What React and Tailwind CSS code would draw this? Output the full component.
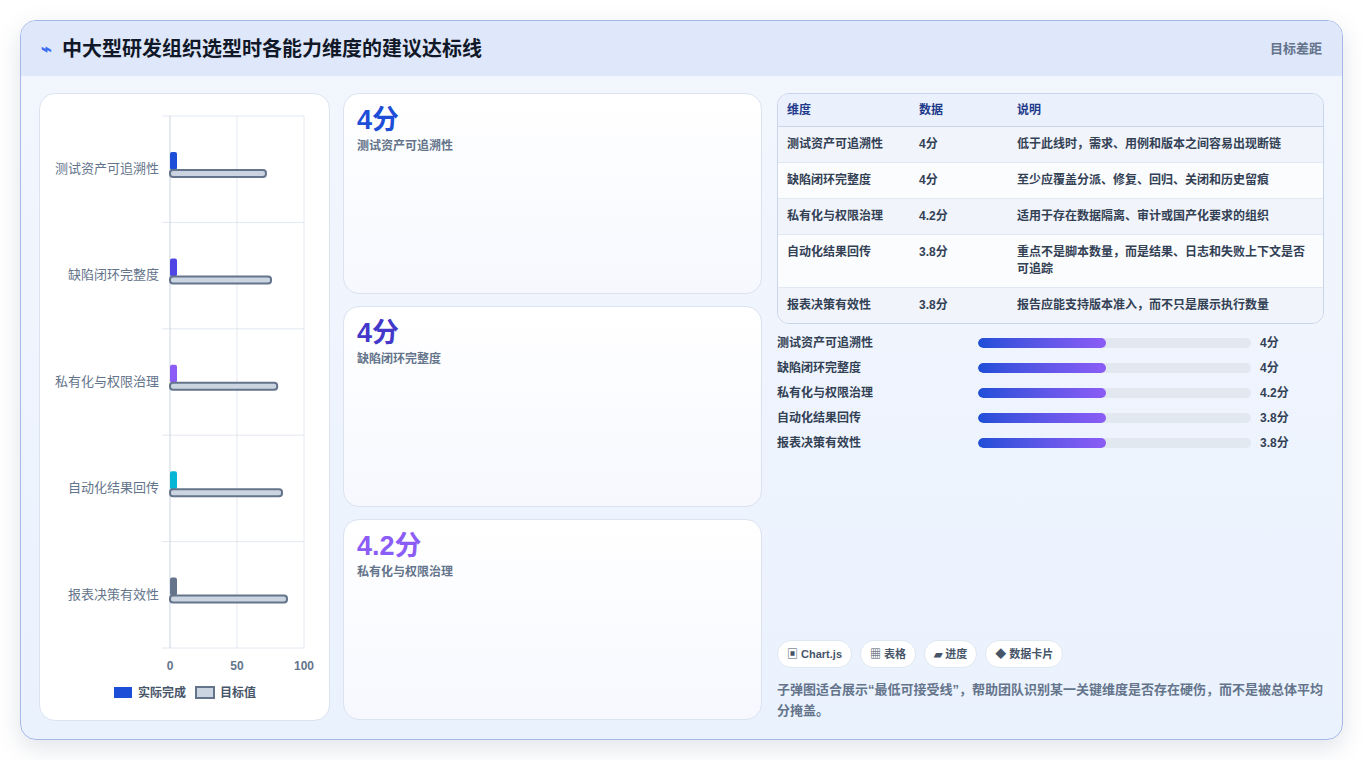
const rows = [
  { name: '测试资产可追溯性', v: '4分', t: 71.6, c: '#1d4ed8', desc: '低于此线时，需求、用例和版本之间容易出现断链' },
  { name: '缺陷闭环完整度', v: '4分', t: 75.4, c: '#4f46e5', desc: '至少应覆盖分派、修复、回归、关闭和历史留痕' },
  { name: '私有化与权限治理', v: '4.2分', t: 80, c: '#8b5cf6', desc: '适用于存在数据隔离、审计或国产化要求的组织' },
  { name: '自动化结果回传', v: '3.8分', t: 83.6, c: '#06b6d4', desc: '重点不是脚本数量，而是结果、日志和失败上下文是否可追踪' },
  { name: '报表决策有效性', v: '3.8分', t: 87.3, c: '#64748b', desc: '报告应能支持版本准入，而不只是展示执行数量' },
];

const font = { fontFamily: '"Liberation Sans", "Noto Sans CJK SC", sans-serif' };

function Chart() {
  // svg origin = card top-left (40, 93)
  const x0 = 130, sc = 1.34;
  return (
    <svg width="290" height="627" className="block">
      {[0, 1, 2, 3, 4, 5].map(i => (
        <line key={i} x1="122" x2="264" y1={22 + i * 106.4} y2={22 + i * 106.4} stroke="#e2e8f0" />
      ))}
      <line x1="130" x2="130" y1="22" y2="554" stroke="#cbd5e1" />
      <line x1="197" x2="197" y1="22" y2="554" stroke="#e2e8f0" />
      <line x1="264" x2="264" y1="22" y2="554" stroke="#e2e8f0" />
      {rows.map((r, i) => {
        const cy = 75 + i * 106.4;
        return (
          <g key={i}>
            <text x="119" y={cy + 4} textAnchor="end" fontSize="13" fill="#64748b">{r.name}</text>
            <rect x={x0} y={cy - 17} width="7" height="18" rx="2" fill={r.c} />
            <rect x={x0} y={cy + 1} width={r.t * sc} height="7" rx="3" fill="#cbd5e1" stroke="#64748b" strokeWidth="2" />
          </g>
        );
      })}
      {[0, 50, 100].map((v, i) => (
        <text key={v} x={x0 + i * 67} y="576" textAnchor="middle" fontSize="12" fontWeight="700" fill="#64748b">{v}</text>
      ))}
      <rect x="74" y="593" width="18" height="11" fill="#1d4ed8" />
      <text x="98" y="603" fontSize="12" fontWeight="700" fill="#475569">实际完成</text>
      <rect x="156" y="593" width="18" height="11" fill="#cbd5e1" stroke="#64748b" strokeWidth="2" />
      <text x="180" y="603" fontSize="12" fontWeight="700" fill="#475569">目标值</text>
    </svg>
  );
}

export default function App() {
  return (
    <div className="w-[1363px] h-[760px] bg-white pt-[20px] pl-[20px]" style={font}>
      <div className="w-[1323px] h-[720px] rounded-2xl border border-[#a5b8e8] bg-gradient-to-b from-[#f3f6fd] to-[#eaf2fe] shadow-[0_8px_24px_rgba(100,116,139,0.2)] overflow-hidden flex flex-col">
        <div className="h-[55px] bg-[#dfe7fb] flex items-center justify-between px-[20px] shrink-0">
          <div className="flex items-center gap-[10px]">
            <span className="text-[#3b6ef0] text-[18px] font-bold leading-none">⌁</span>
            <span className="text-[20px] font-bold text-[#111827]">中大型研发组织选型时各能力维度的建议达标线</span>
          </div>
          <span className="text-[13px] text-[#64748b] font-semibold">目标差距</span>
        </div>
        <div className="flex-1 flex gap-[13px] px-[18px] pt-[17px] pb-[18px]">
          <div className="w-[291px] h-[628px] bg-white rounded-2xl border border-[#dbe3f0]">
            <Chart />
          </div>
          <div className="w-[419px] flex flex-col gap-[12px]">
            {rows.slice(0, 3).map((r, i) => (
              <div key={i} className="h-[201px] rounded-2xl border border-[#dbe3f0] bg-gradient-to-b from-white to-[#f6f8fe] px-[13px] pt-[9px]">
                <div className={`text-[27px] font-bold leading-[34px] ${i === 0 ? 'text-[#1d4ed8]' : i === 1 ? 'text-[#4338ca]' : 'text-[#8b5cf6]'}`}>{r.v}</div>
                <div className="text-[12px] font-semibold text-[#64748b]">{r.name}</div>
              </div>
            ))}
          </div>
          <div className="flex-1 flex flex-col ml-[2px]">
            <div className="rounded-xl border border-[#c9d5ea] overflow-hidden text-[12px] font-semibold text-[#334155]">
              <div className="flex h-[33px] items-center bg-[#eaf0fc] text-[#1e3a8a] border-b border-[#c9d5ea]">
                <div className="w-[141px] pl-[9px]">维度</div>
                <div className="w-[98px]">数据</div>
                <div className="flex-1">说明</div>
              </div>
              {rows.map((r, i) => (
                <div key={i} className={`flex py-[9px] leading-[17px] ${i % 2 === 0 ? 'bg-[#f1f4fb]' : 'bg-[#fbfcfe]'} ${i < 4 ? 'border-b border-[#e2e8f0]' : ''}`}>
                  <div className="w-[141px] pl-[9px]">{r.name}</div>
                  <div className="w-[98px]">{r.v}</div>
                  <div className="flex-1 pr-[14px]">{r.desc}</div>
                </div>
              ))}
            </div>
            <div className="flex flex-col gap-[8px] mt-[10px] text-[12px] font-semibold text-[#334155]">
              {rows.map((r, i) => (
                <div key={i} className="flex items-center h-[17px]">
                  <div className="w-[201px]">{r.name}</div>
                  <div className="w-[273px] h-[10px] rounded-full bg-[#e2e8f0] overflow-hidden">
                    <div className="w-[47%] h-full rounded-full bg-gradient-to-r from-[#1d4ed8] to-[#8b5cf6]" />
                  </div>
                  <div className="ml-[9px]">{r.v}</div>
                </div>
              ))}
            </div>
            <div className="flex-1" />
            <div className="flex gap-[8px] text-[11px] font-semibold text-[#475569]">
              {['▣ Chart.js', '▦ 表格', '▰ 进度', '◆ 数据卡片'].map(t => (
                <span key={t} className="h-[28px] px-[9px] flex items-center rounded-full bg-white border border-[#e2e8f0]">{t}</span>
              ))}
            </div>
            <p className="mt-[11px] text-[13px] leading-[21px] font-semibold text-[#64748b]">
              子弹图适合展示“最低可接受线”，帮助团队识别某一关键维度是否存在硬伤，而不是被总体平均分掩盖。
            </p>
          </div>
        </div>
      </div>
    </div>
  );
}
